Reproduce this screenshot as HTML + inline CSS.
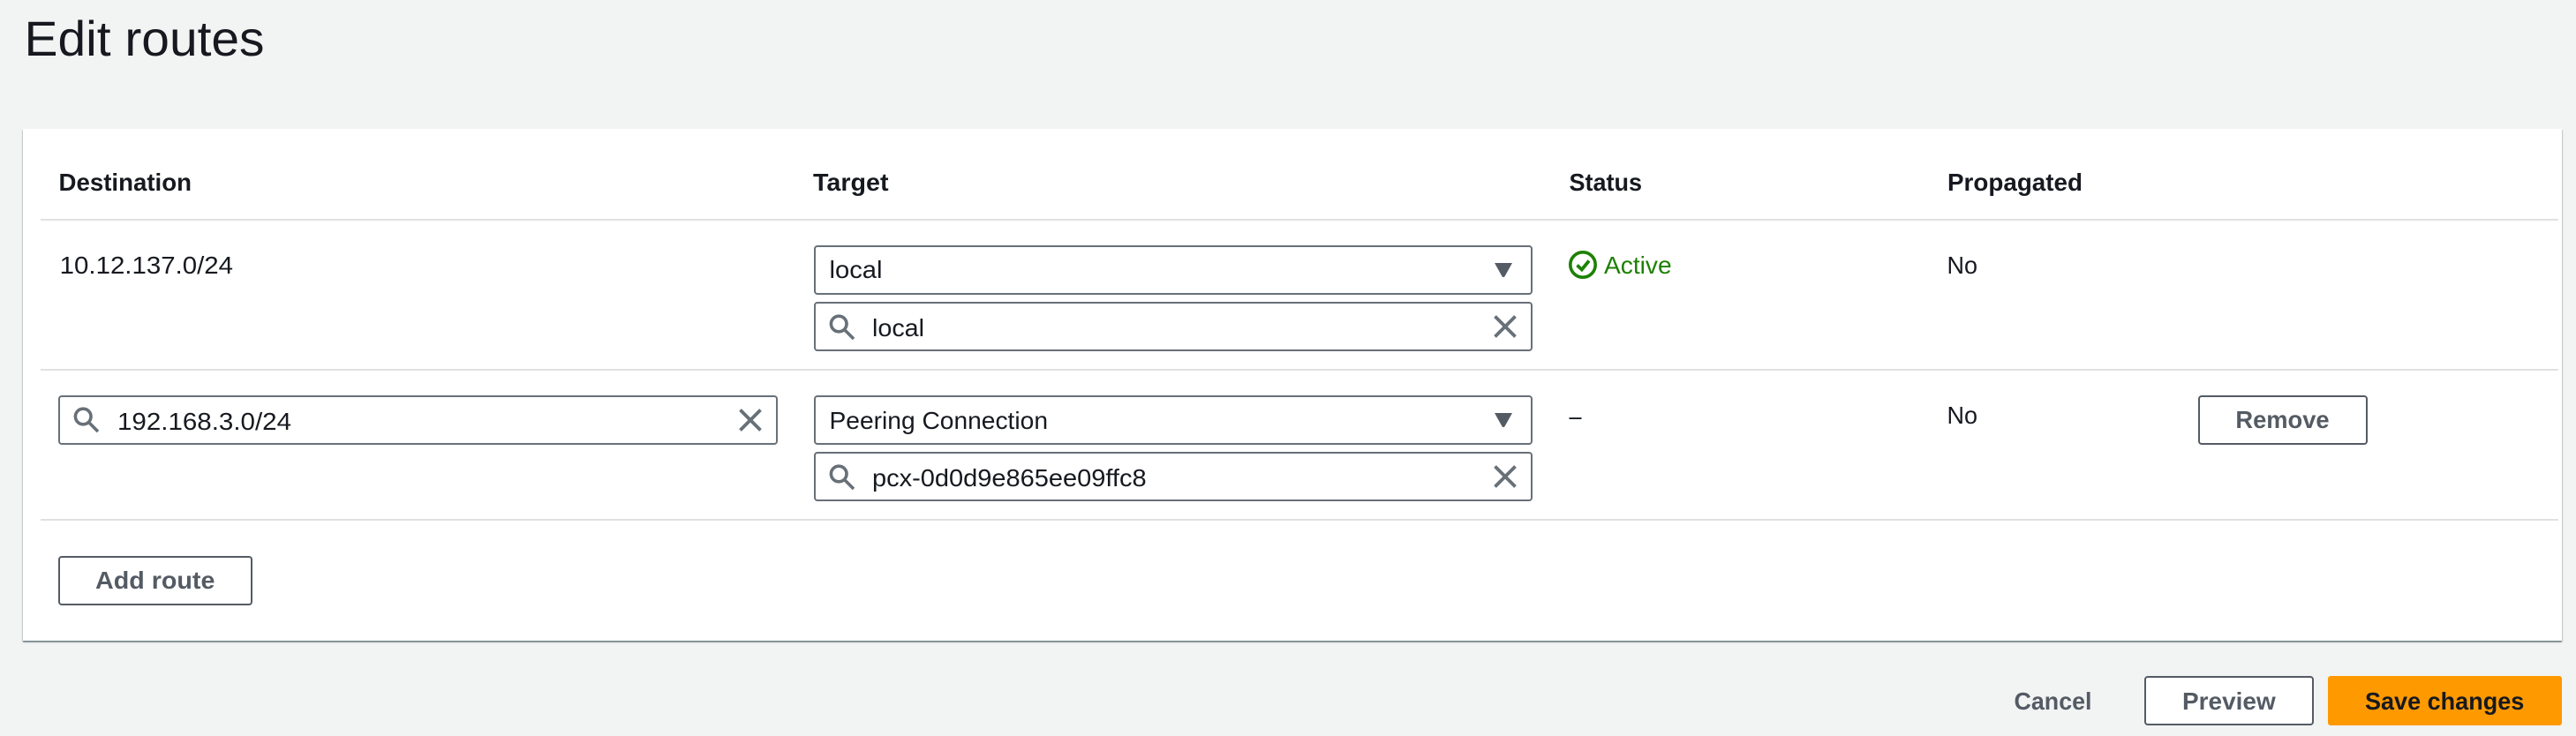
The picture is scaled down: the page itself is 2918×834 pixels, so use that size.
<!DOCTYPE html>
<html lang="en">
<head>
<meta charset="utf-8">
<title>Edit routes</title>
<style>
html,body{margin:0;padding:0;width:2918px;height:834px;overflow:hidden;background:#f2f3f3;}
.card{position:absolute;left:26px;top:146px;width:2876px;height:580px;background:#fff;box-shadow:0 2px 1px rgba(0,28,36,.38),1px 1px 1px rgba(0,28,36,.15),-1px 1px 1px rgba(0,28,36,.15);}
svg{position:absolute;left:0;top:0;}
text{font-family:"Liberation Sans",sans-serif;fill:#16191f;font-size:28px;}
.b{font-weight:700;}
.g{font-weight:700;fill:#545b64;}
.ic{fill:none;stroke:#687078;stroke-width:3.6;}
.box{fill:#fff;stroke:#687078;stroke-width:2;}
.btn{fill:#fff;stroke:#545b64;stroke-width:2;}
.ln{fill:#e0e1e1;}
</style>
</head>
<body>
<div class="card"></div>
<svg width="2918" height="834" viewBox="0 0 2918 834" xmlns="http://www.w3.org/2000/svg">
<defs>
<g id="s"><circle cx="950.2" cy="367" r="8.8" class="ic"/><path d="M956.5 373.5L967 384" class="ic"/></g>
<g id="x"><path d="M1693.5 358.5L1716.5 381.5M1716.5 358.5L1693.5 381.5" class="ic" style="stroke-width:3.8"/></g>
<g id="t"><path d="M1693 298H1713L1704.5 313.2Q1703 315 1701.5 313.2Z" fill="#545b64"/></g>
</defs>

<text x="27.5" y="63" style="font-size:56px" textLength="272" lengthAdjust="spacingAndGlyphs">Edit routes</text>

<rect class="ln" x="46" y="248" width="2852" height="2"/>
<rect class="ln" x="46" y="418" width="2852" height="2"/>
<rect class="ln" x="46" y="588" width="2852" height="2"/>

<text class="b" x="66.5" y="216" textLength="150.5" lengthAdjust="spacingAndGlyphs">Destination</text>
<text class="b" x="921" y="216" textLength="85.5" lengthAdjust="spacingAndGlyphs">Target</text>
<text class="b" x="1777.5" y="216" textLength="82.5" lengthAdjust="spacingAndGlyphs">Status</text>
<text class="b" x="2206" y="216" textLength="153" lengthAdjust="spacingAndGlyphs">Propagated</text>

<text x="67.7" y="310" textLength="196.3" lengthAdjust="spacingAndGlyphs">10.12.137.0/24</text>

<rect class="box" x="923" y="279" width="812" height="54" rx="3"/>
<text x="939.5" y="315" textLength="60" lengthAdjust="spacingAndGlyphs">local</text>
<use href="#t"/>

<rect class="box" x="923" y="343" width="812" height="54" rx="3"/>
<use href="#s"/>
<text x="988" y="381" textLength="59" lengthAdjust="spacingAndGlyphs">local</text>
<use href="#x"/>

<circle cx="1793" cy="300" r="14.2" fill="none" stroke="#1d8102" stroke-width="3.6"/>
<path d="M1786.5 300.5L1791.8 305.5L1800 295.5" fill="none" stroke="#1d8102" stroke-width="3.8"/>
<text x="1817" y="310" textLength="76.6" lengthAdjust="spacingAndGlyphs" style="fill:#1d8102">Active</text>

<text x="2205.5" y="310" textLength="34.5" lengthAdjust="spacingAndGlyphs">No</text>

<rect class="box" x="67" y="449" width="813" height="54" rx="3"/>
<use href="#s" transform="translate(-856 105)"/>
<text x="133" y="487" textLength="197" lengthAdjust="spacingAndGlyphs">192.168.3.0/24</text>
<use href="#x" transform="translate(-855 106)"/>

<rect class="box" x="923" y="449" width="812" height="54" rx="3"/>
<text x="939.5" y="486" textLength="247.5" lengthAdjust="spacingAndGlyphs">Peering Connection</text>
<use href="#t" transform="translate(0 170)"/>

<rect class="box" x="923" y="513" width="812" height="54" rx="3"/>
<use href="#s" transform="translate(0 170)"/>
<text x="988" y="551" textLength="310.6" lengthAdjust="spacingAndGlyphs">pcx-0d0d9e865ee09ffc8</text>
<use href="#x" transform="translate(0 170)"/>

<text x="1777.5" y="481" textLength="14" lengthAdjust="spacingAndGlyphs">–</text>
<text x="2205.5" y="480" textLength="34.5" lengthAdjust="spacingAndGlyphs">No</text>

<rect class="btn" x="2491" y="449" width="190" height="54" rx="3"/>
<text class="g" x="2532.4" y="485" textLength="106.2" lengthAdjust="spacingAndGlyphs">Remove</text>

<rect class="btn" x="67" y="631" width="218" height="54" rx="3"/>
<text class="g" x="108" y="667" textLength="135.4" lengthAdjust="spacingAndGlyphs">Add route</text>

<text class="g" x="2281.5" y="804" textLength="88" lengthAdjust="spacingAndGlyphs">Cancel</text>

<rect class="btn" x="2430" y="767" width="190" height="54" rx="3"/>
<text class="g" x="2472" y="804" textLength="105.7" lengthAdjust="spacingAndGlyphs">Preview</text>

<rect x="2637" y="766" width="265" height="56" rx="3" fill="#ff9900"/>
<text class="b" x="2679" y="804" textLength="180.3" lengthAdjust="spacingAndGlyphs">Save changes</text>
</svg>
</body>
</html>
